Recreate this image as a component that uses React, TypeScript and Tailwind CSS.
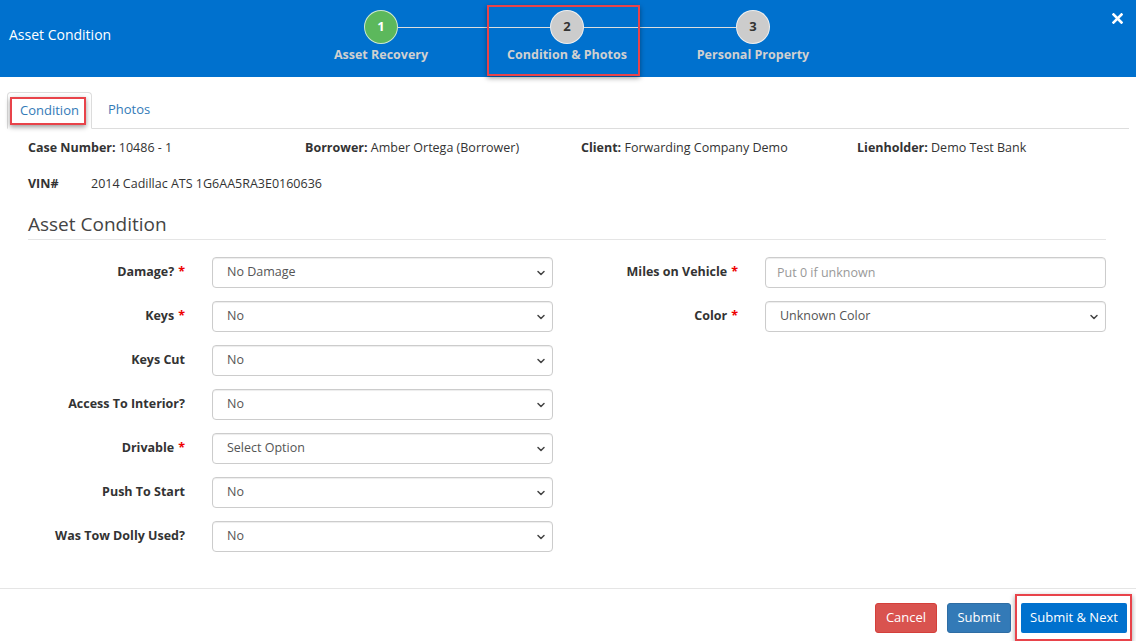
import { ChevronDown } from 'lucide-react'

const steps = [
  { n: '1', label: 'Asset Recovery', done: true },
  { n: '2', label: 'Condition & Photos', done: false },
  { n: '3', label: 'Personal Property', done: false },
]

const leftFields = [
  { label: 'Damage?', req: true, value: 'No Damage' },
  { label: 'Keys', req: true, value: 'No' },
  { label: 'Keys Cut', req: false, value: 'No' },
  { label: 'Access To Interior?', req: false, value: 'No' },
  { label: 'Drivable', req: true, value: 'Select Option' },
  { label: 'Push To Start', req: false, value: 'No' },
  { label: 'Was Tow Dolly Used?', req: false, value: 'No' },
]

function Circle({ n, done }: { n: string; done: boolean }) {
  return (
    <div
      className={
        'w-[34px] h-[34px] rounded-full flex items-center justify-center text-[13px] font-bold border border-white/70 ' +
        (done ? 'bg-[#5cb85c] text-white border-[#5cb85c]' : 'bg-[#cccccc] text-[#333]')
      }
    >
      {n}
    </div>
  )
}

function Label({ text, req }: { text: string; req: boolean }) {
  return (
    <div className="w-[157px] text-right text-[12.5px] font-bold text-[#333]">
      {text}
      {req && <span className="text-[#e00] ml-1">*</span>}
    </div>
  )
}

function Select({ value }: { value: string }) {
  return (
    <div className="relative ml-[27px] w-[341px] h-[31px]">
      <select
        defaultValue={value}
        className="appearance-none w-full h-full border border-[#ccc] rounded-[4px] bg-white pl-[14px] text-[12.5px] text-[#555] shadow-[inset_0_1px_1px_rgba(0,0,0,0.075)] outline-none"
      >
        <option>{value}</option>
      </select>
      <ChevronDown className="absolute right-[6px] top-[10px] w-[12px] h-[12px] text-[#444] pointer-events-none" strokeWidth={3} />
    </div>
  )
}

export default function App() {
  return (
    <div className="w-[1136px] h-[641px] bg-white font-['Open_Sans',sans-serif] text-[#333] overflow-hidden">
      {/* header */}
      <div className="relative h-[77px] bg-[#0071ce] flex">
        <div className="w-[288px] pl-[9px] pt-[24px] text-white text-[14px]">Asset Condition</div>
        <div className="w-[558px] flex flex-col pt-[10px]">
          <div className="flex items-center pl-[76px]">
            <Circle n="1" done />
            <div className="w-[152px] h-px bg-[#ddd]" />
            <Circle n="2" done={false} />
            <div className="w-[152px] h-px bg-[#ddd]" />
            <Circle n="3" done={false} />
          </div>
          <div className="flex mt-[2px]">
            {steps.map((s) => (
              <div key={s.n} className="w-[186px] text-center text-[12.5px] font-bold text-[#d0d0d0]">
                {s.label}
              </div>
            ))}
          </div>
        </div>
        <div className="flex-1 flex justify-end pr-[13px] pt-[13px]">
          <svg width="11" height="11" viewBox="0 0 11 11">
            <path d="M1.5 1.5 L9.5 9.5 M9.5 1.5 L1.5 9.5" stroke="white" strokeWidth="2.6" strokeLinecap="square" />
          </svg>
        </div>
        <div className="absolute left-[487px] top-[5px] w-[153px] h-[71px] border-[2.5px] border-[#e8434a] shadow-[0_2px_5px_rgba(0,0,0,0.4)]" />
      </div>

      {/* tabs */}
      <div className="px-[7px] pt-[15px]">
        <div className="flex border-b border-[#ddd] h-[37px]">
          <div className="relative w-[85px] h-[37px] border border-[#ddd] border-b-white bg-white rounded-t-[4px] flex items-center pl-[12px] text-[13px] text-[#337ab7]">
            Condition
            <div className="absolute left-[2px] top-[4px] w-[76px] h-[28px] border-[2.5px] border-[#e8434a] shadow-[0_2px_5px_rgba(0,0,0,0.4)]" />
          </div>
          <div className="flex items-center pl-[16px] text-[13px] text-[#337ab7]">Photos</div>
        </div>
      </div>

      {/* body */}
      <div className="px-[28px]">
        <div className="flex mt-[9px] text-[12.5px] leading-[19px]">
          <div className="w-[277px]"><b>Case Number:</b> 10486 - 1</div>
          <div className="w-[276px]"><b>Borrower:</b> Amber Ortega (Borrower)</div>
          <div className="w-[276px]"><b>Client:</b> Forwarding Company Demo</div>
          <div><b>Lienholder:</b> Demo Test Bank</div>
        </div>
        <div className="flex mt-[17px] text-[12.5px] leading-[19px]">
          <div className="w-[63px] font-bold">VIN#</div>
          <div>2014 Cadillac ATS 1G6AA5RA3E0160636</div>
        </div>
        <div className="mt-[18px] mr-[2px] border-b border-[#e5e5e5] pb-[1px] text-[19px] text-[#444] leading-[27px]">
          Asset Condition
        </div>

        <div className="flex mt-[17px]">
          <div className="flex flex-col gap-[13px]">
            {leftFields.map((f) => (
              <div key={f.label} className="flex items-center">
                <Label text={f.label} req={f.req} />
                <Select value={f.value} />
              </div>
            ))}
          </div>
          <div className="flex flex-col gap-[13px] ml-[28px]">
            <div className="flex items-center">
              <Label text="Miles on Vehicle" req />
              <input
                placeholder="Put 0 if unknown"
                className="ml-[27px] w-[341px] h-[31px] border border-[#ccc] rounded-[4px] pl-[11px] text-[12.5px] text-[#555] placeholder:text-[#999] shadow-[inset_0_1px_1px_rgba(0,0,0,0.075)] outline-none"
              />
            </div>
            <div className="flex items-center">
              <Label text="Color" req />
              <Select value="Unknown Color" />
            </div>
          </div>
        </div>
      </div>

      {/* footer */}
      <div className="mt-[36px] border-t border-[#e5e5e5] flex justify-end items-center gap-[10px] pt-[14px] pr-[9px]">
        <button className="w-[62px] h-[30px] rounded-[3px] bg-[#d9534f] border border-[#d43f3a] text-white text-[13px]">Cancel</button>
        <button className="w-[64px] h-[30px] rounded-[3px] bg-[#337ab7] border border-[#2e6da4] text-white text-[13px]">Submit</button>
        <div className="relative">
          <button className="w-[106px] h-[30px] rounded-[2px] bg-[#0071ce] text-white text-[13px]">Submit &amp; Next</button>
          <div className="absolute left-[-6px] top-[-9px] w-[117px] h-[47px] border-[2.5px] border-[#e8434a] shadow-[0_2px_5px_rgba(0,0,0,0.4)]" />
        </div>
      </div>
    </div>
  )
}
